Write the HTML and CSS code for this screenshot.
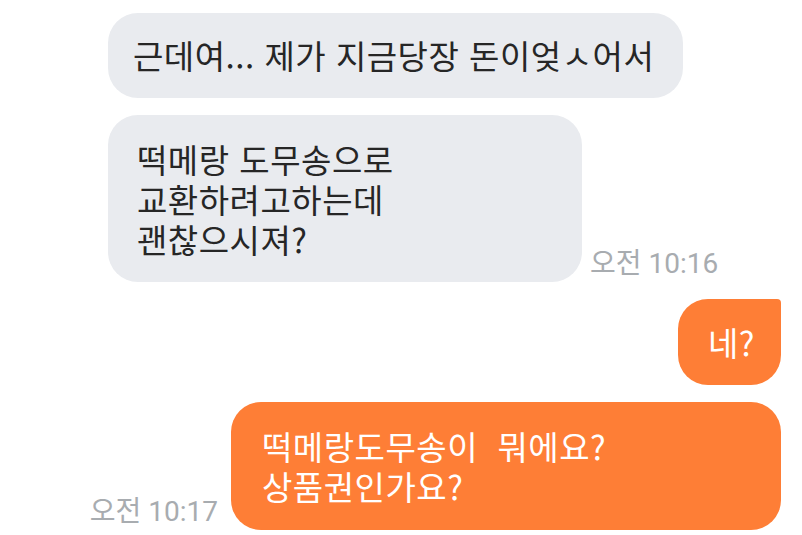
FILE: index.html
```html
<!DOCTYPE html>
<html lang="ko">
<head>
  <meta charset="UTF-8">
  <meta name="viewport" content="width=device-width, initial-scale=1.0">
  <title>채팅</title>
  <link rel="stylesheet" href="styles.css">
</head>
<body>
  <div class="chat">
    <div class="row left">
      <div class="bubble recv first">근데여... 제가 지금당장 돈이엊ㅅ어서</div>
    </div>
    <div class="row left">
      <div class="bubble recv second">떡메랑 도무송으로<br>교환하려고하는데<br>괜찮으시져?</div>
      <span class="time">오전 10:16</span>
    </div>
    <div class="row right">
      <div class="bubble sent tail">네?</div>
    </div>
    <div class="row right">
      <span class="time">오전 10:17</span>
      <div class="bubble sent wide">떡메랑도무송이&nbsp; 뭐에요?<br>상품권인가요?</div>
    </div>
  </div>
</body>
</html>
```

FILE: styles.css
```css
body {
  margin: 0;
  background: #fff;
  font-family: "Noto Sans CJK KR", "Noto Sans", sans-serif;
}
.chat {
  display: flex;
  flex-direction: column;
  gap: 17px;
  padding: 13px 21px 0 0;
}
.row {
  display: flex;
  align-items: flex-end;
}
.row.left {
  padding-left: 108px;
}
.row.right {
  justify-content: flex-end;
}
.bubble {
  flex-shrink: 0;
  box-sizing: border-box;
  font-size: 33px;
  line-height: 40px;
  letter-spacing: 0.5px;
  border-radius: 30px;
  color: #262626;
}
.recv {
  background: #e9ebef;
}
.recv.first {
  width: 575px;
  padding: 22px 0 23px 25px;
}
.recv.second {
  width: 474px;
  padding: 24px 0 23px 29px;
}
.sent {
  background: #fe7e36;
  color: #fff;
}
.sent.tail {
  width: 103px;
  padding: 23px 0 23px 30px;
  border-top-right-radius: 4px;
}
.sent.wide {
  width: 550px;
  padding: 24px 0 24px 31px;
}
.time {
  white-space: nowrap;
  font-family: Roboto, "Noto Sans CJK KR", sans-serif;
  font-size: 28px;
  color: #a8acb0;
  line-height: 32px;
  padding-bottom: 2px;
}
.row.left .time {
  margin-left: 8px;
}
.row.right .time {
  margin-right: 13px;
}
```
